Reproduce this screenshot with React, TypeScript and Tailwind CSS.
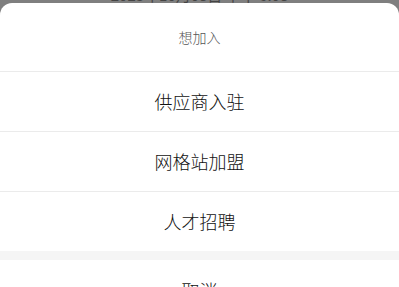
import React from 'react';

const OPTIONS = ['供应商入驻', '网格站加盟', '人才招聘'];

const font = { fontFamily: '"Noto Sans CJK SC", "Noto Sans", sans-serif' };

export default function App() {
  return (
    <div className="relative w-[399px] h-[287px] overflow-hidden bg-[#7f7f7f]" style={font}>
      <div className="absolute left-0 right-0 top-[-16px] text-center text-[15px] text-[#444]">2023年10月08日 下午 6:08</div>
      <div className="absolute left-0 right-0 top-[3px] bg-white rounded-t-[12px]">
        <div className="h-[68px] flex items-center justify-center text-[14px] font-light text-[#555]">想加入</div>
        {OPTIONS.map(o => (
          <div key={o} className="h-[60px] border-t border-[#ebebeb] flex items-center justify-center text-[18px] font-light text-[#111]">
            {o}
          </div>
        ))}
        <div className="h-[9px] bg-[#f5f5f5]" />
        <div className="h-[60px] flex items-center justify-center text-[18px] font-light text-[#111]">取消</div>
      </div>
    </div>
  );
}
